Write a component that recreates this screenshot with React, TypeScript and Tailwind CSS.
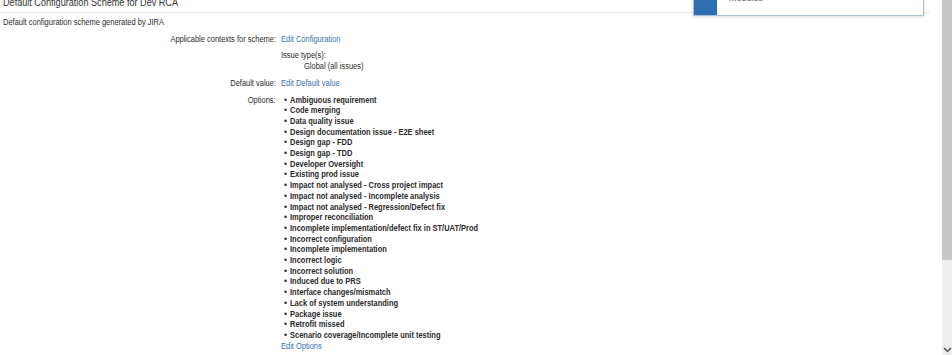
import React from "react";

const options = [
  "Ambiguous requirement",
  "Code merging",
  "Data quality issue",
  "Design documentation issue - E2E sheet",
  "Design gap - FDD",
  "Design gap - TDD",
  "Developer Oversight",
  "Existing prod issue",
  "Impact not analysed - Cross project impact",
  "Impact not analysed - Incomplete analysis",
  "Impact not analysed - Regression/Defect fix",
  "Improper reconciliation",
  "Incomplete implementation/defect fix in ST/UAT/Prod",
  "Incorrect configuration",
  "Incomplete implementation",
  "Incorrect logic",
  "Incorrect solution",
  "Induced due to PRS",
  "Interface changes/mismatch",
  "Lack of system understanding",
  "Package issue",
  "Retrofit missed",
  "Scenario coverage/Incomplete unit testing",
];

function T({ children, right }: { children: React.ReactNode; right?: boolean }) {
  return (
    <span
      className={
        right
          ? "inline-block whitespace-nowrap scale-x-[0.88] origin-right"
          : "inline-block whitespace-nowrap scale-x-[0.88] origin-left"
      }
    >
      {children}
    </span>
  );
}

export default function App() {
  return (
    <div
      className="relative w-[952px] h-[355px] overflow-hidden bg-white text-[#2b2b2b] text-[8.5px] leading-[10.7px]"
      style={{ fontFamily: '"Liberation Sans", Arial, sans-serif' }}
    >
      <div className="flex h-full">
        <div className="flex-1 min-w-0">
          <div className="mt-[-5px] pl-[3px] border-b border-[#e8e8e8] pb-[1px] text-[10px] leading-[16px] text-[#333] mr-[12px]">
            <span className="inline-block whitespace-nowrap scale-x-[0.91] origin-left">
              Default Configuration Scheme for Dev RCA
            </span>
          </div>
          <div className="pl-[3px] mt-[4px]">
            <T>Default configuration scheme generated by JIRA</T>
          </div>

          <div className="mt-[6px] grid grid-cols-[276px_1fr] gap-x-[5px]">
            <div className="text-right">
              <T right>Applicable contexts for scheme:</T>
            </div>
            <div>
              <a className="text-[#3572b0]">
                <T>Edit Configuration</T>
              </a>
              <div className="mt-[6px]">
                <T>Issue type(s):</T>
              </div>
              <div className="pl-[23px]">
                <T>Global (all issues)</T>
              </div>
            </div>

            <div className="text-right mt-[6px]">
              <T right>Default value:</T>
            </div>
            <div className="mt-[6px]">
              <a className="text-[#3572b0]">
                <T>Edit Default value</T>
              </a>
            </div>

            <div className="text-right mt-[6px]">
              <T right>Options:</T>
            </div>
            <div className="mt-[6px]">
              <ul className="pl-[3px]">
                {options.map((o) => (
                  <li key={o} className="flex font-bold">
                    <span className="w-[6px] shrink-0 font-normal">•</span>
                    <T>{o}</T>
                  </li>
                ))}
              </ul>
              <a className="text-[#3572b0]">
                <T>Edit Options</T>
              </a>
            </div>
          </div>
        </div>
        <div className="w-[10px] shrink-0 flex flex-col bg-[#efefef]">
          <div className="h-[260px] bg-[#c8c8c8]" />
          <div className="flex-1" />
          <div className="h-[10px] flex items-center justify-center">
            <svg width="9" height="6" viewBox="0 0 9 6">
              <path d="M1 1 L4.5 4.5 L8 1" stroke="#555" strokeWidth="1.5" fill="none" />
            </svg>
          </div>
        </div>
      </div>

      <div className="absolute left-[693px] top-[-20px] w-[231px] h-[36px] flex border border-[#a9c0dc] bg-white shadow-[0_1px_3px_rgba(0,0,0,0.15)]">
        <div className="w-[23px] bg-[#2f6eb0]" />
        <div className="pl-[12px] pt-[12px] text-[#666] text-[9px] leading-[10px]">Modules</div>
      </div>
    </div>
  );
}
